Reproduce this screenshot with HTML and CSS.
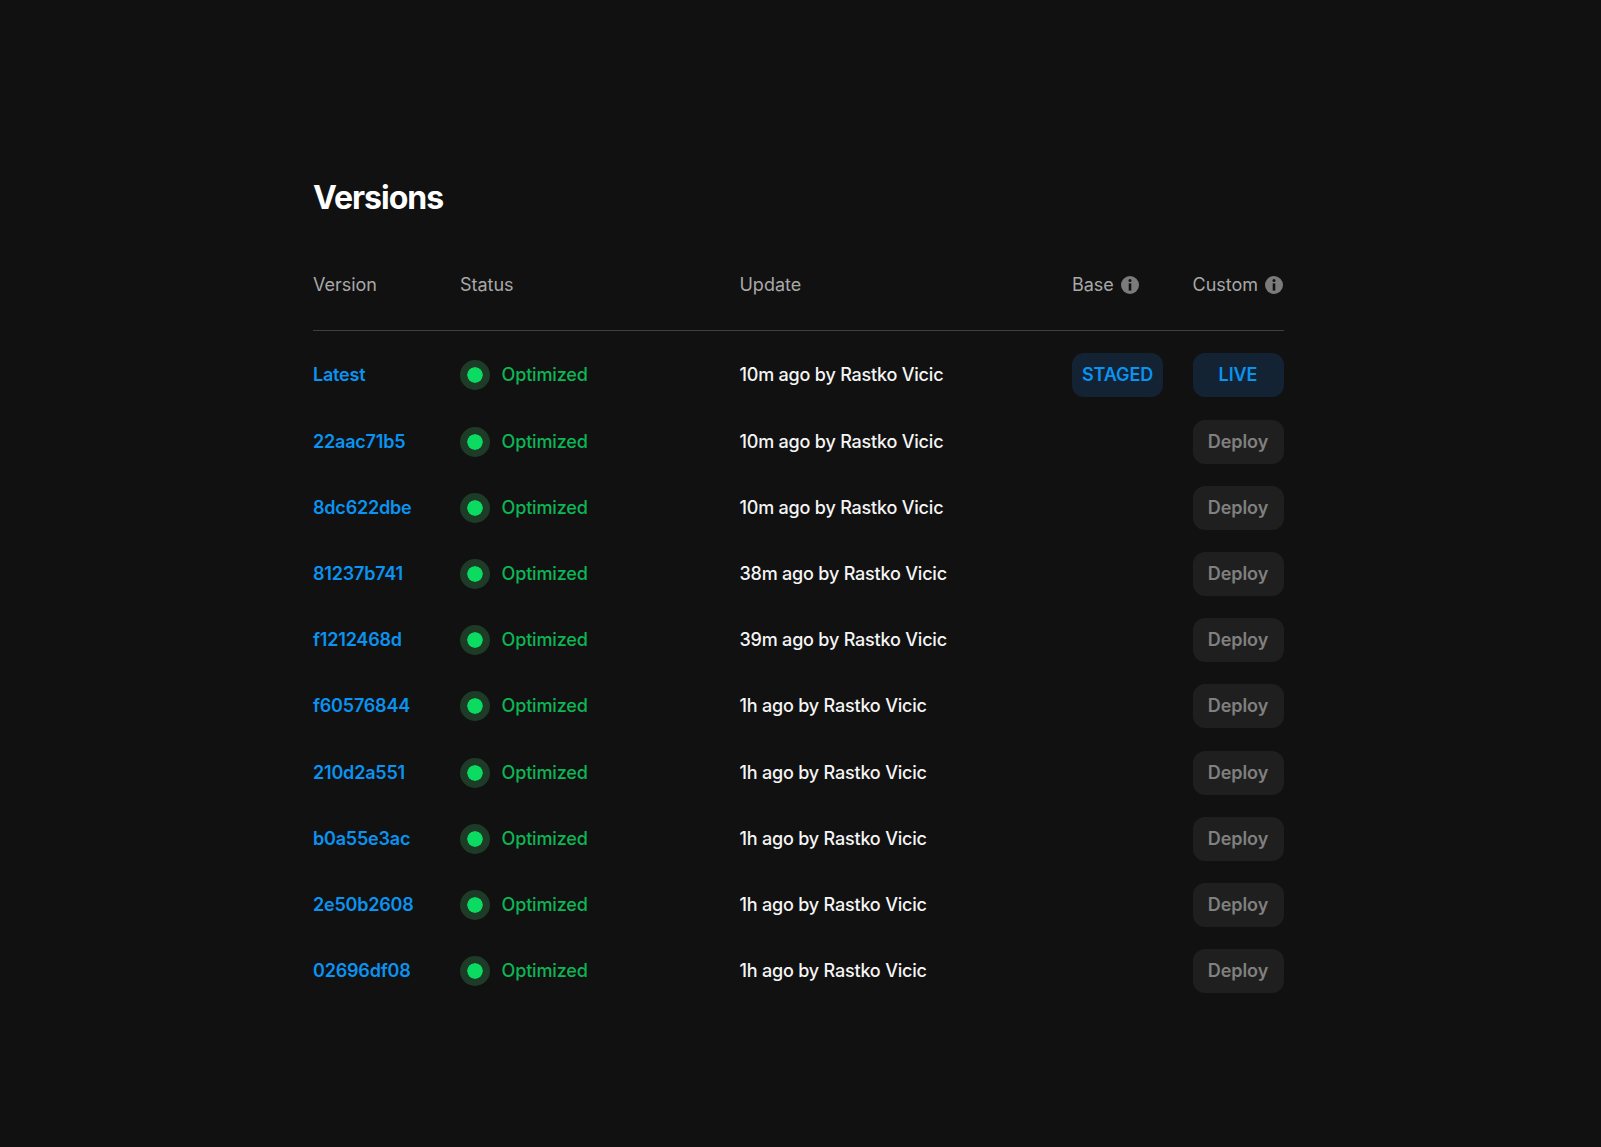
FILE: index.html
```html
<!DOCTYPE html>
<html lang="en">
<head>
<meta charset="utf-8">
<title>Versions</title>
<link rel="stylesheet" href="styles.css">
</head>
<body>
<main class="panel">
  <h1 class="title">Versions</h1>
  <div class="row head">
    <div>Version</div>
    <div>Status</div>
    <div>Update</div>
    <div class="with-info">Base <svg class="info" viewBox="0 0 18 18"><circle cx="9" cy="9" r="9" fill="#7b7b7b"/><circle cx="9" cy="4.6" r="1.5" fill="#111"/><rect x="7.7" y="7.4" width="2.6" height="7.2" fill="#111"/></svg></div>
    <div class="with-info">Custom <svg class="info" viewBox="0 0 18 18"><circle cx="9" cy="9" r="9" fill="#7b7b7b"/><circle cx="9" cy="4.6" r="1.5" fill="#111"/><rect x="7.7" y="7.4" width="2.6" height="7.2" fill="#111"/></svg></div>
  </div>
  <div class="rows">
    <div class="row"><a class="ver">Latest</a><div class="status"><span class="dot"></span>Optimized</div><div class="upd">10m ago by Rastko Vicic</div><span class="btn live">STAGED</span><span class="btn live">LIVE</span></div>
    <div class="row"><a class="ver">22aac71b5</a><div class="status"><span class="dot"></span>Optimized</div><div class="upd">10m ago by Rastko Vicic</div><span></span><span class="btn deploy">Deploy</span></div>
    <div class="row"><a class="ver">8dc622dbe</a><div class="status"><span class="dot"></span>Optimized</div><div class="upd">10m ago by Rastko Vicic</div><span></span><span class="btn deploy">Deploy</span></div>
    <div class="row"><a class="ver">81237b741</a><div class="status"><span class="dot"></span>Optimized</div><div class="upd">38m ago by Rastko Vicic</div><span></span><span class="btn deploy">Deploy</span></div>
    <div class="row"><a class="ver">f1212468d</a><div class="status"><span class="dot"></span>Optimized</div><div class="upd">39m ago by Rastko Vicic</div><span></span><span class="btn deploy">Deploy</span></div>
    <div class="row"><a class="ver">f60576844</a><div class="status"><span class="dot"></span>Optimized</div><div class="upd">1h ago by Rastko Vicic</div><span></span><span class="btn deploy">Deploy</span></div>
    <div class="row"><a class="ver">210d2a551</a><div class="status"><span class="dot"></span>Optimized</div><div class="upd">1h ago by Rastko Vicic</div><span></span><span class="btn deploy">Deploy</span></div>
    <div class="row"><a class="ver">b0a55e3ac</a><div class="status"><span class="dot"></span>Optimized</div><div class="upd">1h ago by Rastko Vicic</div><span></span><span class="btn deploy">Deploy</span></div>
    <div class="row"><a class="ver">2e50b2608</a><div class="status"><span class="dot"></span>Optimized</div><div class="upd">1h ago by Rastko Vicic</div><span></span><span class="btn deploy">Deploy</span></div>
    <div class="row"><a class="ver">02696df08</a><div class="status"><span class="dot"></span>Optimized</div><div class="upd">1h ago by Rastko Vicic</div><span></span><span class="btn deploy">Deploy</span></div>
  </div>
</main>
</body>
</html>
```
FILE: styles.css
```css
html, body { margin: 0; background: #111111; }
body { font-family: Inter, "Liberation Sans", sans-serif; font-size: 18px; min-height: 1147px; }
.panel { width: 971px; margin-left: 313px; padding-top: 178px; }
.title { margin: 0 0 45px; font-size: 32px; line-height: 40px; font-weight: 700; letter-spacing: -1px; color: #fff; }
.row { display: grid; grid-template-columns: 147px 279.5px 332.5px 120.5px 91.5px; align-items: center; height: 44px; line-height: 22px; }
.head { color: #a8a8a8; height: 44px; padding-bottom: 23px; border-bottom: 1px solid #3f3f3f; margin-bottom: 22.4px; letter-spacing: -0.02px; }
.with-info { display: flex; align-items: center; gap: 7px; white-space: nowrap; }
.info { width: 18px; height: 18px; flex: none; }
.rows { display: flex; flex-direction: column; gap: 22.2px; }
.ver { color: #0a93f0; font-weight: 600; letter-spacing: -0.2px; }
.status { display: flex; align-items: center; gap: 11.5px; color: #0db655; font-weight: 500; letter-spacing: -0.15px; }
.dot { flex: none; box-sizing: border-box; width: 30px; height: 30px; border-radius: 50%; background: #0cdb62; border: 7px solid #1e3b28; background-clip: padding-box; }
.upd { color: #f5f5f5; font-weight: 500; letter-spacing: -0.2px; }
.btn { display: flex; align-items: center; justify-content: center; width: 91px; height: 44px; border-radius: 12px; }
.live { background: #132333; color: #0a93f0; font-weight: 600; letter-spacing: -0.1px; }
.deploy { background: #1f1f1f; color: #808080; font-weight: 600; letter-spacing: -0.05px; }
```
